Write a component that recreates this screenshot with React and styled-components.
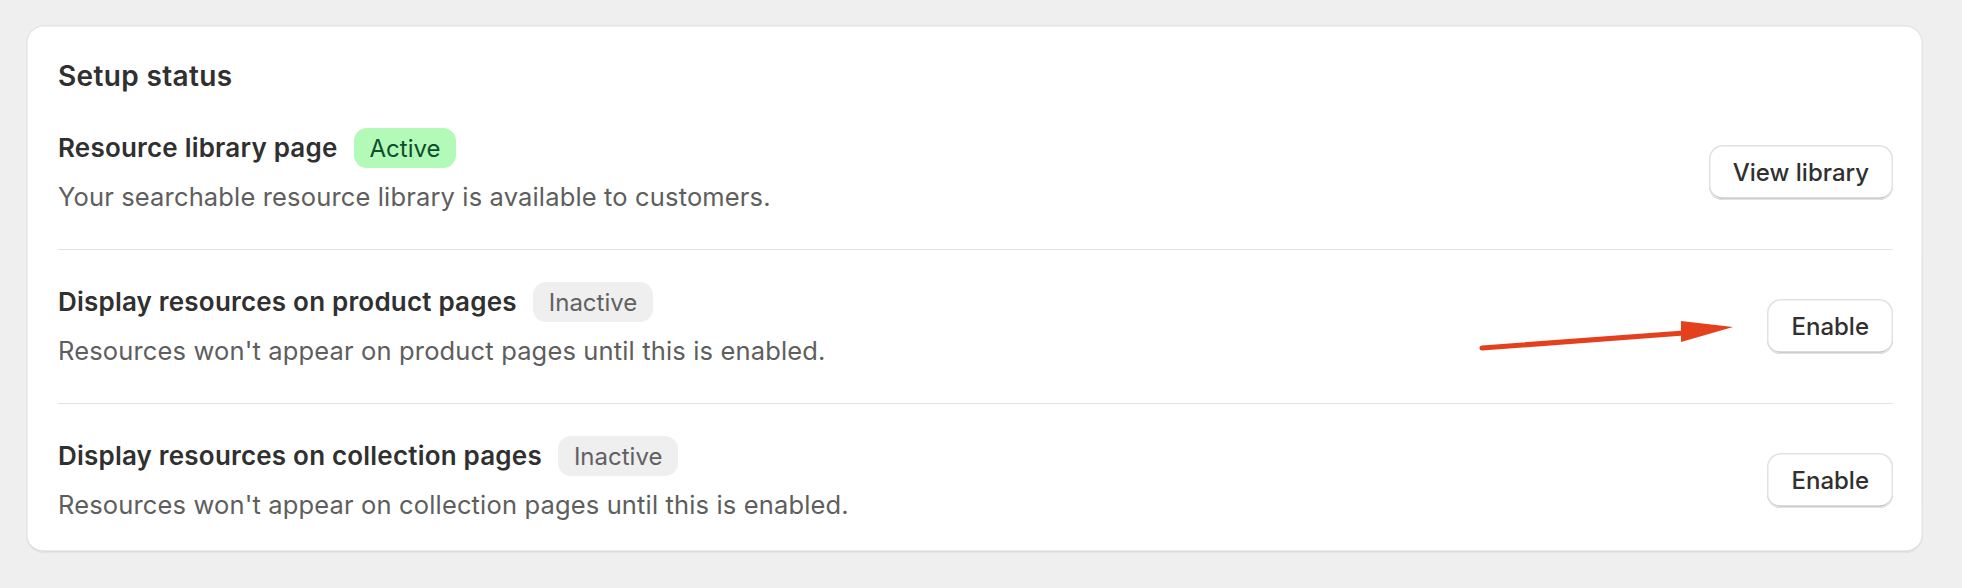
import React from "react";
import styled, { createGlobalStyle } from "styled-components";

const Global = createGlobalStyle`
  html, body {
    margin: 0;
    padding: 0;
    background: #efefef;
  }
  body {
    font-family: "Inter", "Noto Sans", "Liberation Sans", sans-serif;
    -webkit-font-smoothing: antialiased;
  }
`;

const Page = styled.div`
  padding: 25px 39px 35px 26px;
`;

const Card = styled.section`
  position: relative;
  background: #ffffff;
  border-radius: 18px;
  padding: 31px 30px 29px 32px;
  box-shadow:
    inset 0 0 0 1.5px #e4e4e4,
    inset 0 -2.5px 0 0 #d6d6d6;
`;

const Heading = styled.h2`
  margin: 0;
  font-size: 28px;
  line-height: 40px;
  font-weight: 600;
  color: #303030;
  letter-spacing: 0.35px;
`;

const List = styled.div`
  display: flex;
  flex-direction: column;
`;

const Row = styled.div`
  display: flex;
  align-items: center;
  justify-content: space-between;
  gap: 24px;
  padding: 32px 0 ${(p) => (p.$last ? "0" : "33px")};
  & + & {
    border-top: 1px solid #e3e3e3;
  }
`;

const Info = styled.div`
  display: flex;
  flex-direction: column;
  gap: 10px;
`;

const TitleLine = styled.div`
  display: flex;
  align-items: center;
  gap: 16px;
  height: 40px;
`;

const Title = styled.h3`
  margin: 0;
  font-size: 26px;
  line-height: 38px;
  font-weight: 600;
  color: #303030;
  letter-spacing: 0.2px;
`;

const Badge = styled.span`
  display: inline-flex;
  align-items: center;
  height: 40px;
  padding: 0 16px;
  border-radius: 13px;
  font-size: 24px;
  font-weight: 400;
  background: ${(p) => (p.$tone === "success" ? "#b3f9b8" : "#efefef")};
  color: ${(p) => (p.$tone === "success" ? "#0c4f2c" : "#616161")};
`;

const Description = styled.p`
  margin: 0;
  font-size: 25.5px;
  line-height: 38px;
  font-weight: 400;
  color: #5e5e5e;
  letter-spacing: 0.15px;
`;

const Button = styled.button`
  flex: none;
  height: 55px;
  padding: 0 24px;
  border: none;
  border-radius: 14px;
  background: #ffffff;
  font-family: inherit;
  font-size: 24px;
  font-weight: 550;
  color: #303030;
  cursor: pointer;
  box-shadow:
    inset 0 0 0 1.5px #e2e2e2,
    inset 0 -2.5px 0 0 #b8b8b8;
`;

const Arrow = styled.svg`
  position: absolute;
  left: 1452px;
  top: 291px;
  overflow: visible;
  pointer-events: none;
`;

const rows = [
  {
    title: "Resource library page",
    status: "Active",
    tone: "success",
    desc: "Your searchable resource library is available to customers.",
    action: "View library",
  },
  {
    title: "Display resources on product pages",
    status: "Inactive",
    tone: "neutral",
    desc: "Resources won't appear on product pages until this is enabled.",
    action: "Enable",
  },
  {
    title: "Display resources on collection pages",
    status: "Inactive",
    tone: "neutral",
    desc: "Resources won't appear on collection pages until this is enabled.",
    action: "Enable",
  },
];

export default function App() {
  return (
    <Page>
      <Global />
      <Card>
        <Heading>Setup status</Heading>
        <List>
          {rows.map((r, i) => (
            <Row key={r.title} $last={i === rows.length - 1}>
              <Info>
                <TitleLine>
                  <Title>{r.title}</Title>
                  <Badge $tone={r.tone}>{r.status}</Badge>
                </TitleLine>
                <Description>{r.desc}</Description>
              </Info>
              <Button>{r.action}</Button>
            </Row>
          ))}
        </List>
        <Arrow width="260" height="40" viewBox="0 0 260 40">
          <line
            x1="4"
            y1="32"
            x2="206"
            y2="17"
            stroke="#e4401d"
            strokeWidth="5"
            strokeLinecap="round"
          />
          <polygon points="203,5 255,11 203,26" fill="#e4401d" />
        </Arrow>
      </Card>
    </Page>
  );
}
